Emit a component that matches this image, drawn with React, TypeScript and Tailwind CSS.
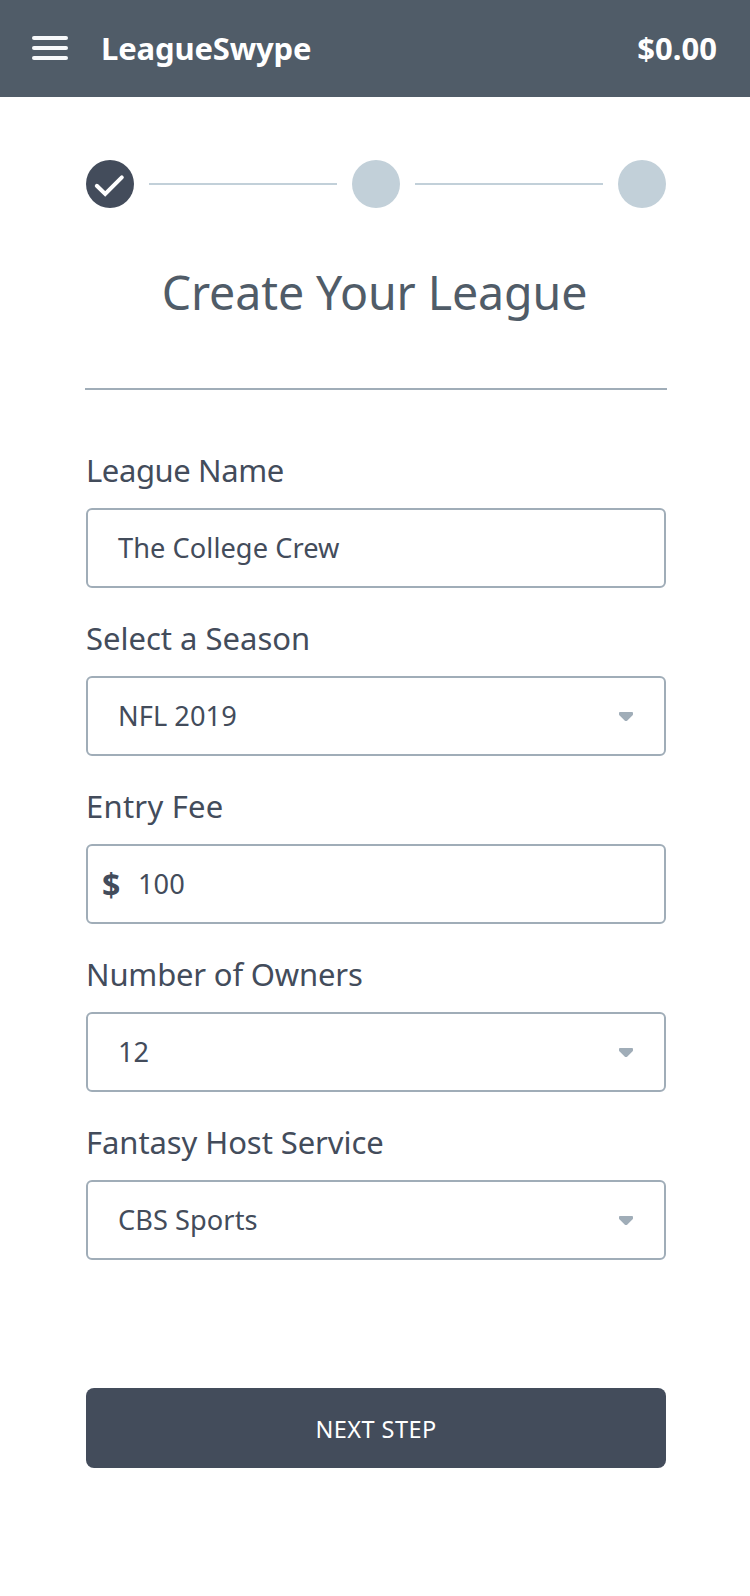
import type { ReactNode } from "react";

function Step({ done = false }: { done?: boolean }) {
  return (
    <div className={`flex size-12 shrink-0 items-center justify-center rounded-full ${done ? "bg-[#434c5b]" : "bg-[#c2d0d9]"}`}>
      {done && (
        <svg className="size-12" viewBox="0 0 48 48" fill="none" stroke="#fff" strokeWidth="4" strokeLinecap="round">
          <path d="M10.8 25.8 19.2 34 35.8 17.4" />
        </svg>
      )}
    </div>
  );
}

function Connector() {
  return <div className="mx-[15px] h-0.5 flex-1 bg-[#c2d0d9]" />;
}

type FieldProps = { label: string; labelClass?: string; select?: boolean; prefix?: boolean; children: ReactNode };

function Field({ label, labelClass = "", select = false, prefix = false, children }: FieldProps) {
  return (
    <div>
      <div className="mb-[18px] flex h-10 items-center text-[31px] leading-10 whitespace-nowrap">
        <span className={labelClass}>{label}</span>
      </div>
      <div className="flex h-20 items-center rounded-md border-2 border-[#a0adb8] pr-[31px] text-[27.2px] tracking-[0.06px] whitespace-nowrap">
        {prefix && <span className="w-[50px] pt-0.5 pl-3.5 text-[32px] leading-10 font-bold">$</span>}
        <span className={prefix ? "pt-px" : "pt-px pl-[30px]"}>{children}</span>
        {select && (
          <svg className="ml-auto h-[9px] w-3.5" viewBox="0 0 14 9" fill="#a0adb8">
            <path d="M1.200 0h11.600C13.600 0 14 .5 14 1.200v1c0 .6-.2 1-.6 1.400L8.400 8.400c-.8.800-2 .8-2.800 0L.6 3.600C.2 3.200 0 2.800 0 2.200v-1C0 .5.4 0 1.200 0Z" />
          </svg>
        )}
      </div>
    </div>
  );
}

export default function App() {
  return (
    <div className="min-h-[1596px] bg-white font-['Noto_Sans',sans-serif] text-[#434c5b]">
      <header className="flex h-[97px] items-center bg-[#505c68] pr-[33px] pb-px pl-8 text-[31px] leading-10 font-bold text-white">
        <div className="flex w-9 flex-col gap-1.5">
          <div className="h-1 rounded-full bg-[#f7f9fb]" />
          <div className="h-1 rounded-full bg-[#f7f9fb]" />
          <div className="h-1 rounded-full bg-[#f7f9fb]" />
        </div>
        <span className="ml-[33px] tracking-[-0.15px]">LeagueSwype</span>
        <span className="ml-auto">$0.00</span>
      </header>
      <main className="pt-[63px] pr-[83px] pl-[85px]">
        <div className="flex items-center px-px">
          <Step done />
          <Connector />
          <Step />
          <Connector />
          <Step />
        </div>
        <h1 className="mt-[52px] h-16 pr-[3px] text-center text-[46.5px] leading-[64px] tracking-[-0.1px] whitespace-nowrap text-[#505c68]">
          Create Your League
        </h1>
        <div className="mt-16 h-0.5 bg-[#a0adb8]" />
        <div className="mt-[60px] flex flex-col gap-[30px] px-px">
          <Field label="League Name" labelClass="tracking-[-0.4px]">The College Crew</Field>
          <Field label="Select a Season" select>NFL 2019</Field>
          <Field label="Entry Fee" labelClass="tracking-[0.25px]" prefix>100</Field>
          <Field label="Number of Owners" labelClass="tracking-[-0.18px]" select>12</Field>
          <Field label="Fantasy Host Service" labelClass="tracking-[-0.08px]" select>CBS Sports</Field>
          <button className="mt-[98px] flex h-20 w-full items-center justify-center rounded-lg bg-[#434c5b] pt-[3px] text-[23.5px] tracking-[0.45px] text-white">
            NEXT STEP
          </button>
        </div>
      </main>
    </div>
  );
}
